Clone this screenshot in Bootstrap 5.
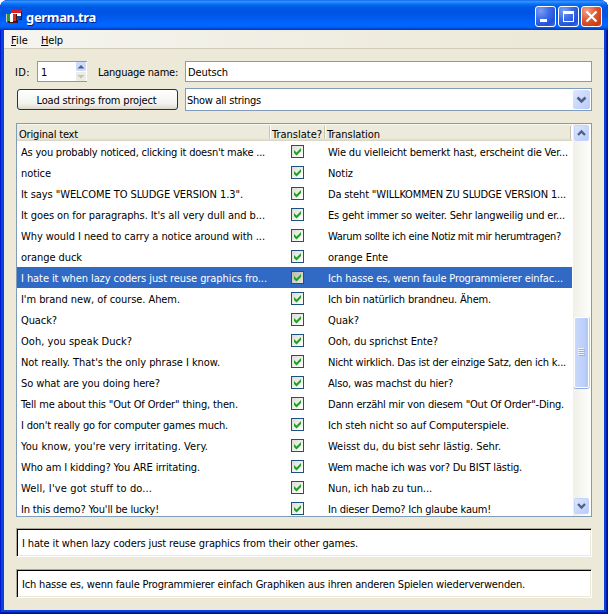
<!DOCTYPE html>
<html lang="en">
<head>
<meta charset="utf-8">
<title>german.tra</title>
<link href="https://cdn.jsdelivr.net/npm/bootstrap@5.3.0/dist/css/bootstrap.min.css" rel="stylesheet">
<style>
body{width:608px;height:614px;overflow:hidden;background:#fff;color:#000;font:11px/13px "DejaVu Sans Condensed","DejaVu Sans",sans-serif;font-stretch:condensed}
.win{width:608px;height:614px;border-radius:8px 8px 0 0;overflow:hidden;background:#0842dc;padding:0 4px 4px;box-shadow:inset 1px 0 #0019cf,inset -1px -1px #00138c,inset -2px -2px #001ea0}
.titlebar{height:30px;margin:0 -4px;padding:3px 6px 0 6px;background:linear-gradient(#0058e6 0,#3a93ff 1px,#288eff 2px,#0872f3 4px,#0058e6 7px,#0054e3 14px,#0060fa 21px,#0066ff 25px,#0061f5 27px,#0042d0 29px,#0036bd 30px)}
.caption{font:bold 13px/16px "Noto Sans","Open Sans",sans-serif;color:#fff;text-shadow:1px 1px #0a1883}
.btns{gap:2px}
.wbtn{width:21px;height:21px;border:1px solid #fff;border-radius:3px;background:radial-gradient(circle at 25% 20%,#7b9df5,#3e6de8 40%,#2150d8 75%,#3f76f4)}
.wbtn.quit{background:radial-gradient(circle at 25% 20%,#f3a38c,#e1572f 45%,#c93a10 85%,#e0684a)}
.client{height:580px;background:#ece9d8}
.menus{height:19px;background:linear-gradient(90deg,#f5f4ef,#ece9d8 90%);border-bottom:1px solid #cfcbb8;padding:4px 0 0 7px;gap:13px}
.menus u{text-underline-offset:1px}
.fit{white-space:pre;display:inline-block}
.edge{border:1px solid #7f9db9;background:#fff}
.form1{height:21px;margin-top:12px}
.form2{height:23px;margin-top:6px}
.idlabel{width:33px;padding:1px 0 0 11px}
.idbox{width:50px;height:21px;border-right:0}
.num{padding-left:3px;line-height:21px}
.spin{width:11px;height:19px;background:#fff}
.spin div{height:9px;width:10px;background:#cbdafd;border-radius:1px;line-height:0}
.spin div+div{background:#ecebe4;margin-top:1px}
.langlabel{padding:1px 0 0 11px;width:98px}
.lang{width:407px;height:21px;line-height:21px;padding-left:2px}
.push{width:161px;height:21px;margin:1px 0 0 13px;border:1px solid #003c74;border-radius:3px;background:linear-gradient(#fff,#f3f3ef 70%,#dcd8cc);line-height:21px;padding-right:2px}
.combo{width:407px;height:23px;margin-left:7px;padding:1px 1px 1px 1px;line-height:21px}
.arrow{width:17px;border-radius:2px;background:linear-gradient(135deg,#dce6ff,#b9cbf9)}
.strings{width:576px;height:394px;margin:12px 0 0 12px}
.grid{width:555px;overflow:hidden;height:391px}
.heads{height:17px;background:linear-gradient(#ebeadb 0,#ebeadb 13px,#e0dccb 15px,#cbc7b8 17px);border-top:1px solid #f8f7f0}
.heads>div{border-right:1px solid #c7c5b2;box-shadow:1px 0 #fff;height:13px;margin-top:1px;line-height:17px;padding-left:2px;white-space:nowrap}
.c1{width:253px}.c2{width:55px}.c3{width:246px}
.line{height:21px;line-height:23px}
.line.on{background:#316ac5;color:#fff}
.line .c1{padding-left:4px;width:274px}
.line .c3{padding-left:24px;width:268px}
.check{width:13px;height:13px;border:1px solid #1c5180;background:linear-gradient(135deg,#dcdcd7,#fff);margin-top:4px;line-height:0}
.on .check{background:linear-gradient(135deg,#b8b8ac,#e8e8dc)}
.scroll{width:18px;height:392px;background:linear-gradient(90deg,#f0efe8,#fefefb);margin-left:1px;padding:1px 1px 0 1px}
.scroll .arrow{width:15px;height:16px;border:1px solid #c3d3fd}
.thumb{width:15px;height:71px;margin-top:176px;border:1px solid #fff;border-radius:2px;background:linear-gradient(90deg,#c9d8fc,#bccffb 70%,#b0c5f5);box-shadow:0 1px #90abe0,1px 0 #c3cfe8}
.tail{margin-top:110px}
.sunk{width:576px;height:29px;margin:11px 0 0 12px;background:#fff;border:1px solid;border-color:#aca899 #fff #fff #aca899;box-shadow:inset 1px 1px #000,inset -1px -1px #ece9d8;padding:0 5px;line-height:29px}
.low{margin-top:12px}
svg{display:block}
</style>
<script src="https://cdn.jsdelivr.net/npm/bootstrap@5.3.0/dist/js/bootstrap.bundle.min.js"></script>
</head>
<body>
<div class="win">
  <div class="titlebar d-flex align-items-center">
    <svg width="16" height="16" shape-rendering="crispEdges"><path fill="#3a1418" d="M14 3h2v8h-4v3h-4v-3h5z"/><path fill="#d8202c" d="M5 1h10v3H5z"/><path fill="#fff" d="M5 4h10v3H5z"/><path fill="#20409c" d="M9 7h6v3H9z"/><path fill="#401818" d="M2 12h8v2H2zM10 5h1v8h-1z"/><path fill="#249b3c" d="M1 5h3v7H1z"/><path fill="#fff" d="M4 5h3v8H4z"/><path fill="#d83028" d="M7 5h3v7H7z"/><path fill="#bcc8bc" d="M0 5h1v8H0z"/></svg>
    <span class="caption ms-1"><span class="fit" data-w="69">german.tra</span></span>
    <div class="btns d-flex ms-auto">
      <div class="wbtn"><svg width="19" height="19"><path fill="#fff" d="M4 12h7v3H4z"/></svg></div>
      <div class="wbtn"><svg width="19" height="19" shape-rendering="crispEdges"><path fill="#fff" d="M4 4h11v11H4zm1 3v7h9V7z" fill-rule="evenodd"/></svg></div>
      <div class="wbtn quit"><svg width="19" height="19"><path stroke="#fff" stroke-width="2.2" d="M4.5 4.500 14.500 14.500M14.500 4.500 4.500 14.500"/></svg></div>
    </div>
  </div>
  <div class="client">
    <div class="menus d-flex"><span class="fit" data-w="16"><u>F</u>ile</span><span class="fit" data-w="21"><u>H</u>elp</span></div>
    <div class="form1 d-flex align-items-center">
      <div class="idlabel"><span class="fit" data-w="14">ID:</span></div>
      <div class="edge idbox d-flex justify-content-between"><span class="num">1</span><div class="spin"><div><svg width="10" height="9"><path d="M1.500 6.500h7L5 3z" fill="#4d6185"/></svg></div><div><svg width="10" height="9"><path d="M1.500 3h7L5 6.500z" fill="#c4c2b5"/></svg></div></div></div>
      <div class="langlabel"><span class="fit" data-w="79">Language name:</span></div>
      <div class="edge lang"><span class="fit" data-w="39">Deutsch</span></div>
    </div>
    <div class="form2 d-flex">
      <div class="push text-center"><span class="fit" data-w="119">Load strings from project</span></div>
      <div class="edge combo d-flex justify-content-between"><span class="fit" data-w="73">Show all strings</span><div class="arrow"><svg width="17" height="19"><path d="M4.500 7.500 8.500 11.500 12.500 7.500" fill="none" stroke="#4d6185" stroke-width="2.500"/></svg></div></div>
    </div>
    <div class="strings edge d-flex">
      <div class="grid">
        <div class="heads d-flex"><div class="c1"><span class="fit" data-w="58">Original text</span></div><div class="c2"><span class="fit" data-w="49">Translate?</span></div><div class="c3"><span class="fit" data-w="52">Translation</span></div></div>
        <div id="rows"></div>
      </div>
      <div class="scroll">
        <div class="arrow"><svg width="13" height="14"><path d="M3 9 6.500 5.500 10 9" fill="none" stroke="#4d6185" stroke-width="2.300"/></svg></div>
        <div class="thumb"><svg width="13" height="69" shape-rendering="crispEdges"><path d="M3 30h6v1H3zm0 2h6v1H3zm0 2h6v1H3zm0 2h6v1H3z" fill="#eef4fe"/><path d="M4 31h6v1H4zm0 2h6v1H4zm0 2h6v1H4zm0 2h6v1H4z" fill="#8cb0f8"/></svg></div>
        <div class="arrow tail"><svg width="13" height="14"><path d="M3 5 6.500 8.500 10 5" fill="none" stroke="#4d6185" stroke-width="2.300"/></svg></div>
      </div>
    </div>
    <div class="sunk"><span class="fit" data-w="335">I hate it when lazy coders just reuse graphics from their other games.</span></div>
    <div class="sunk low"><span class="fit" data-w="502">Ich hasse es, wenn faule Programmierer einfach Graphiken aus ihren anderen Spielen wiederverwenden.</span></div>
  </div>
</div>
<script>
// Each entry: source string, its width, translation, its width
const strings = [
["As you probably noticed, clicking it doesn't make ...",243,"Wie du vielleicht bemerkt hast, erscheint die Ver...",239],
["notice",29,"Notiz",24],
['It says "WELCOME TO SLUDGE VERSION 1.3".',221,'Da steht "WILLKOMMEN ZU SLUDGE VERSION 1...',237],
["It goes on for paragraphs. It's all very dull and b...",243,"Es geht immer so weiter. Sehr langweilig und er...",236],
["Why would I need to carry a notice around with ...",243,"Warum sollte ich eine Notiz mit mir herumtragen?",232],
["orange duck",60,"orange Ente",59],
["I hate it when lazy coders just reuse graphics fro...",245,"Ich hasse es, wenn faule Programmierer einfac...",234],
["I'm brand new, of course. Ahem.",158,"Ich bin natürlich brandneu. Ähem.",162],
["Quack?",35,"Quak?",30],
["Ooh, you speak Duck?",110,"Ooh, du sprichst Ente?",109],
["Not really. That's the only phrase I know.",198,"Nicht wirklich. Das ist der einzige Satz, den ich k...",237],
["So what are you doing here?",138,"Also, was machst du hier?",124],
['Tell me about this "Out Of Order" thing, then.',216,'Dann erzähl mir von diesem "Out Of Order"-Ding.',235],
["I don't really go for computer games much.",206,"Ich steh nicht so auf Computerspiele.",180],
["You know, you're very irritating. Very.",186,"Weisst du, du bist sehr lästig. Sehr.",172],
["Who am I kidding? You ARE irritating.",178,"Wem mache ich was vor? Du BIST lästig.",193],
["Well, I've got stuff to do...",130,"Nun, ich hab zu tun...",103],
["In this demo? You'll be lucky!",137,"In dieser Demo? Ich glaube kaum!",162]];
const tick = '<svg width="11" height="11"><path d="M2 4v3L4.500 9.500 9 5V2L4.500 6.500z" fill="#21a121"/></svg>';
document.getElementById("rows").innerHTML = strings.map((s,i)=>
`<div class="line d-flex${i===6?" on":""}"><div class="c1"><span class="fit" data-w="${s[1]}">${s[0]}</span></div><div class="check">${tick}</div><div class="c3"><span class="fit" data-w="${s[3]}">${s[2]}</span></div></div>`).join("");
document.querySelectorAll(".fit").forEach(e=>{
  const n=e.textContent.length, w=e.getBoundingClientRect().width;
  e.style.letterSpacing=((+e.dataset.w+1-w)/n)+"px";
});
</script>
</body>
</html>
